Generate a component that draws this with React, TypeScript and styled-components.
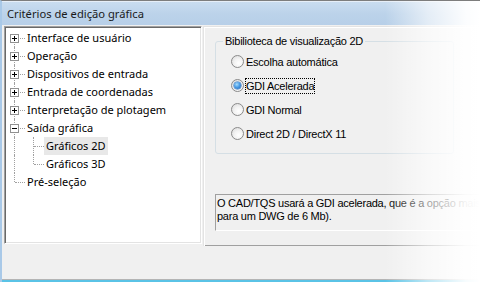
import React from "react";
import styled, { createGlobalStyle, css } from "styled-components";

const Global = createGlobalStyle`
  html, body { margin: 0; padding: 0; background: #ffffff; }
  body { width: 480px; height: 282px; overflow: hidden; }
  * { box-sizing: border-box; }
`;

const Window = styled.div`
  position: relative;
  width: 480px;
  height: 282px;
  overflow: hidden;
  background: #f0f0f0;
  border-top: 1px solid #7d7d7d;
  border-left: 2px solid #a9c9e8;
  display: flex;
  flex-direction: column;
`;

const TitleBar = styled.div`
  height: 24px;
  flex: none;
  display: flex;
  align-items: center;
  padding-left: 5px;
  background: linear-gradient(to bottom, #c9dcef 0%, #bcd3ea 50%, #b7cfe8 100%);
  border-top: 1px solid #e6eef7;
  font-family: "Noto Sans", sans-serif;
  font-size: 11.2px;
  color: #1a1a1a;
`;

const Body = styled.div`
  display: flex;
  align-items: flex-start;
  gap: 1px;
  padding: 1px 0 0 2px;
  height: 221px;
  flex: none;
`;

const TreePanel = styled.div`
  width: 198px;
  height: 218px;
  flex: none;
  background: #ffffff;
  border: 1px solid;
  border-color: #a0a0a0 #ffffff #ffffff #a0a0a0;
  box-shadow: inset 1px 1px 0 #696969, inset -1px -1px 0 #e3e3e3;
  padding: 2px 0 0 1px;
  font-family: "Noto Sans", sans-serif;
  font-size: 11px;
  color: #000000;
`;

const Row = styled.div`
  height: 18px;
  display: flex;
  align-items: center;
`;

type CellKind = "pass" | "first" | "tee" | "end" | "childTee" | "childEnd";

const Cell = styled.div<{ $kind: CellKind }>`
  position: relative;
  width: 19px;
  height: 18px;
  flex: none;
  &::before {
    content: "";
    position: absolute;
    left: 8px;
    width: 0;
    border-left: 1px dotted #a0a0a0;
    ${({ $kind }) =>
      $kind === "first"
        ? css`top: 9px; bottom: 0;`
        : $kind === "end" || $kind === "childEnd"
        ? css`top: 0; height: 9px;`
        : css`top: 0; bottom: 0;`}
  }
  &::after {
    content: "";
    position: absolute;
    left: 9px;
    top: 9px;
    width: 10px;
    height: 0;
    border-top: 1px dotted #a0a0a0;
    ${({ $kind }) => $kind === "pass" && css`display: none;`}
  }
`;

const Expander = styled.span`
  position: absolute;
  left: 4px;
  top: 5px;
  width: 9px;
  height: 9px;
  background: #ffffff;
  border: 1px solid #919191;
  z-index: 1;
  &::before {
    content: "";
    position: absolute;
    left: 1px;
    top: 3px;
    width: 5px;
    height: 1px;
    background: #000;
  }
`;

const Plus = styled(Expander)`
  &::after {
    content: "";
    position: absolute;
    left: 3px;
    top: 1px;
    width: 1px;
    height: 5px;
    background: #000;
  }
`;

const Label = styled.span<{ $selected?: boolean }>`
  padding: 0 2px;
  height: 18px;
  line-height: 18px;
  white-space: nowrap;
  background: ${({ $selected }) => ($selected ? "#e8e8e8" : "transparent")};
`;

const RightPanel = styled.div`
  flex: 1;
  height: 221px;
  border: 1px solid;
  border-color: #e3e3e3 #696969 #696969 #e3e3e3;
  box-shadow: inset 1px 1px 0 #ffffff, inset -1px -1px 0 #a0a0a0;
  padding: 14px 0 0 11px;
  display: flex;
  flex-direction: column;
  font-family: "Liberation Sans", Arial, sans-serif;
  font-size: 11px;
  letter-spacing: -0.25px;
  color: #000;
`;

const GroupBox = styled.div`
  position: relative;
  width: 239px;
  height: 113px;
  border: 1px solid #d5dfe5;
  border-radius: 3px;
  padding: 13px 0 0 15px;
  display: flex;
  flex-direction: column;
  gap: 11px;
`;

const Legend = styled.span`
  position: absolute;
  left: 7px;
  top: -8px;
  padding: 0 2px;
  background: #f0f0f0;
  line-height: 14px;
  white-space: nowrap;
`;

const RadioRow = styled.div`
  display: flex;
  align-items: center;
  height: 13px;
  white-space: nowrap;
`;

const RadioCircle = styled.span<{ $checked?: boolean }>`
  position: relative;
  width: 13px;
  height: 13px;
  flex: none;
  border-radius: 50%;
  border: 1px solid #8a8a8a;
  background: radial-gradient(circle at 60% 65%, #ffffff 0%, #f4f4f4 40%, #d8d8d8 100%);
  margin-right: 1px;
  ${({ $checked }) =>
    $checked &&
    css`
      &::after {
        content: "";
        position: absolute;
        left: 2px;
        top: 2px;
        width: 7px;
        height: 7px;
        border-radius: 50%;
        background: radial-gradient(circle at 40% 35%, #a9dcfb 0%, #4a9de6 45%, #1d5eb2 100%);
        box-shadow: 0 0 0 0.5px #2b6cb8;
      }
    `}
`;

const RadioText = styled.span<{ $focused?: boolean }>`
  line-height: 14px;
  padding: 1px 1px;
  outline: ${({ $focused }) => ($focused ? "1px dotted #000" : "none")};
  outline-offset: -1px;
`;

const InfoBox = styled.div`
  margin-top: 40px;
  height: 37px;
  width: 300px;
  border: 1px solid;
  border-color: #a0a0a0 #ffffff #ffffff #a0a0a0;
  padding: 2px 0 0 1px;
  line-height: 13px;
  white-space: nowrap;
  overflow: hidden;
`;

const Footer = styled.div`
  flex: 1;
  background: #f0f0f0;
  border-bottom: 1px solid #b4b4b4;
`;

const BottomLine = styled.div`
  height: 2px;
  flex: none;
  background: #5ac3e6;
`;

const Fade = styled.div`
  position: absolute;
  top: 0;
  right: 0;
  width: 95px;
  height: 100%;
  pointer-events: none;
  background: linear-gradient(
    to right,
    rgba(255, 255, 255, 0) 0%,
    rgba(255, 255, 255, 0.6) 45%,
    rgba(255, 255, 255, 0.95) 85%,
    #ffffff 100%
  );
`;

type Item = {
  label: string;
  cells: CellKind[];
  expander?: "plus" | "minus";
  selected?: boolean;
};

const items: Item[] = [
  { label: "Interface de usuário", cells: ["first"], expander: "plus" },
  { label: "Operação", cells: ["tee"], expander: "plus" },
  { label: "Dispositivos de entrada", cells: ["tee"], expander: "plus" },
  { label: "Entrada de coordenadas", cells: ["tee"], expander: "plus" },
  { label: "Interpretação de plotagem", cells: ["tee"], expander: "plus" },
  { label: "Saída gráfica", cells: ["tee"], expander: "minus" },
  { label: "Gráficos 2D", cells: ["pass", "childTee"], selected: true },
  { label: "Gráficos 3D", cells: ["pass", "childEnd"] },
  { label: "Pré-seleção", cells: ["end"] },
];

const radios = [
  { label: "Escolha automática" },
  { label: "GDI Acelerada", checked: true },
  { label: "GDI Normal" },
  { label: "Direct 2D / DirectX 11" },
];

export default function App() {
  return (
    <>
      <Global />
      <Window>
        <TitleBar>Critérios de edição gráfica</TitleBar>
        <Body>
          <TreePanel>
            {items.map((it) => (
              <Row key={it.label}>
                {it.cells.map((c, i) => (
                  <Cell key={i} $kind={c}>
                    {i === it.cells.length - 1 && it.expander === "plus" && <Plus />}
                    {i === it.cells.length - 1 && it.expander === "minus" && <Expander />}
                  </Cell>
                ))}
                <Label $selected={it.selected}>{it.label}</Label>
              </Row>
            ))}
          </TreePanel>
          <RightPanel>
            <GroupBox>
              <Legend>Bibilioteca de visualização 2D</Legend>
              {radios.map((r) => (
                <RadioRow key={r.label}>
                  <RadioCircle $checked={r.checked} />
                  <RadioText $focused={r.checked}>{r.label}</RadioText>
                </RadioRow>
              ))}
            </GroupBox>
            <InfoBox>
              O CAD/TQS usará a GDI acelerada, que é a opção mais
              <br />
              para um DWG de 6 Mb).
            </InfoBox>
          </RightPanel>
        </Body>
        <Footer />
        <BottomLine />
        <Fade />
      </Window>
    </>
  );
}
